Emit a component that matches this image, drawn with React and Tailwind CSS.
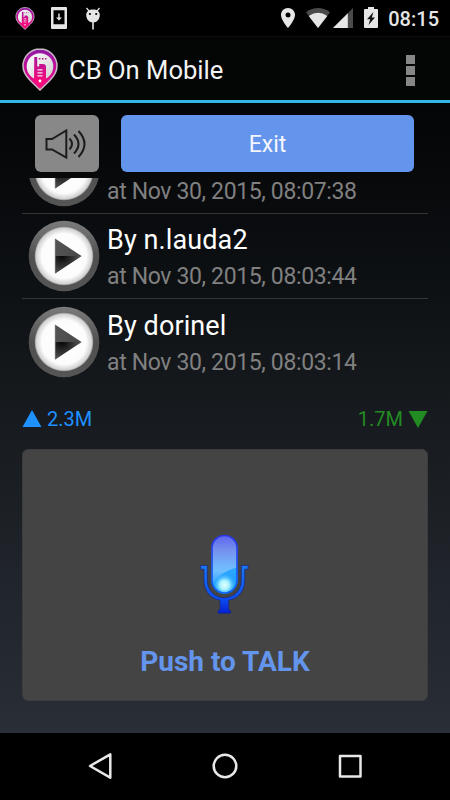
const recordings = [
  { id: 1, time: "Nov 30, 2015, 08:07:38" },
  { id: 2, name: "n.lauda2", time: "Nov 30, 2015, 08:03:44" },
  { id: 3, name: "dorinel", time: "Nov 30, 2015, 08:03:14" },
];

// Pink pin with a walkie-talkie, used in the status bar and the title
function AppLogo({ id, className }) {
  return (
    <svg viewBox="0 0 36 43" className={className}>
      <defs>
        <linearGradient id={id} x1="0" y1="0" x2="0" y2="1">
          <stop offset="0" stopColor="#8f1aa8" />
          <stop offset="0.5" stopColor="#c80c94" />
          <stop offset="1" stopColor="#ff0a78" />
        </linearGradient>
        <linearGradient id={`${id}-device`} gradientUnits="userSpaceOnUse" x1="0" y1="8" x2="0" y2="34">
          <stop offset="0" stopColor="#a5169f" />
          <stop offset="1" stopColor="#ff0a78" />
        </linearGradient>
        <linearGradient id={`${id}-disc`} x1="0" y1="0" x2="1" y2="1">
          <stop offset="0" stopColor="#ffffff" />
          <stop offset="1" stopColor="#cfcfcf" />
        </linearGradient>
      </defs>
      <path
        d="M18 1C8.4 1 1 8.5 1 18c0 5.8 3 10.2 7 14.2L18 42l10-9.800c4-4 7-8.400 7-14.200C35 8.500 27.600 1 18 1z"
        fill={`url(#${id})`}
        stroke="#c9bcc6"
        strokeWidth="1.5"
      />
      <circle cx="18" cy="18.5" r="13.3" fill={`url(#${id}-disc)`} />
      <path d="M12.300 9h2.900v9.500h2V16h3.500q3.300 0 3.300 3v13l-6 6-6-6z" fill={`url(#${id}-device)`} />
      <path d="M15.500 21.800h5M15.500 24.800h5M15.500 27.800h5" stroke="#f6e6f1" strokeWidth="1.3" />
      <circle cx="18" cy="33" r="1.4" fill="#fff" />
      <path d="M16.800 10.800h1.700M19.900 10.800h1.700M23 10.800h1.400" stroke="#b0208f" strokeWidth="1.5" />
    </svg>
  );
}

function StatusBar() {
  return (
    <div className="flex h-9 shrink-0 items-center bg-black pl-[15px] pr-[11px] text-[#e6e6e6]">
      <AppLogo id="pin-small" className="h-[23px] w-5" />
      <svg viewBox="0 0 16 22" className="ml-4 h-[22px] w-4">
        <path
          fillRule="evenodd"
          fill="currentColor"
          d="M1 0h14a1 1 0 0 1 1 1v20a1 1 0 0 1-1 1H1a1 1 0 0 1-1-1V1a1 1 0 0 1 1-1zM2.500 3.200v14h11v-14z"
        />
        <path fill="currentColor" d="M7.300 6.500h1.400v4h2.300L8 13.500l-3-3h2.300z" />
      </svg>
      <svg viewBox="0 0 16 23" className="ml-[18px] h-[23px] w-4">
        <path d="M1.500 1l3 3.500M14.500 1l-3 3.500" stroke="currentColor" strokeWidth="1.2" />
        <path
          d="M8 2.500c4 0 6.800 2 6.800 5.500C14.800 12 12 15.500 8 15.500S1.200 12 1.200 8C1.200 4.500 4 2.500 8 2.500z"
          fill="currentColor"
        />
        <path d="M7.200 15h1.600v7.500H7.200z" fill="currentColor" />
        <circle cx="4.900" cy="7" r="1.1" fill="#000" />
        <circle cx="11.200" cy="7" r="1.1" fill="#000" />
      </svg>

      <div className="ml-auto flex items-center">
        <svg viewBox="0 0 14 20" className="h-5 w-3.5">
          <path
            fillRule="evenodd"
            fill="currentColor"
            d="M7 0C3 0 0 3 0 7c0 5 7 13 7 13s7-8 7-13c0-4-3-7-7-7zm0 4.500a2.500 2.500 0 1 1 0 5 2.500 2.500 0 0 1 0-5z"
          />
        </svg>
        <svg viewBox="0 0 24 20" className="mb-px ml-[11px] h-5 w-6">
          <path d="M0 4.200Q12-4.200 24 4.200L12 20z" fill="#4a4a4a" />
          <path d="M2.700 8Q12 1.600 21.300 8L12 20z" fill="currentColor" />
        </svg>
        <svg viewBox="0 0 20 20" className="mb-px ml-[3px] h-5 w-5">
          <path d="M20 0v20H0z" fill="#4a4a4a" />
          <path d="M14.800 5.200V20H0z" fill="currentColor" />
        </svg>
        <svg viewBox="0 0 14 21" className="mb-0.5 ml-[11px] h-[21px] w-3.5">
          <path d="M4 0h6v2h3q1 0 1 1v17q0 1-1 1H1q-1 0-1-1V3q0-1 1-1h3z" fill="currentColor" />
          <path d="M9.500 5L3 12.300h3.200L4.500 18 11 10.500H7.800z" fill="#111" />
        </svg>
        <span className="ml-[10px] mt-px text-[20px] leading-none font-medium">08:15</span>
      </div>
    </div>
  );
}

function TitleBar() {
  return (
    <header className="flex h-[67px] shrink-0 items-center border-t border-b-[3px] border-t-[#0c0d0d] border-b-[#33b5e5] bg-[#040505] pl-[22px] pr-[35px]">
      <AppLogo id="pin-large" className="mt-px h-[43px] w-9" />
      <h1 className="ml-[11px] pt-[5px] text-[25.600px] leading-none text-[#f3f3f3]">CB On Mobile</h1>
      <div className="ml-auto flex flex-col gap-0.5 pt-[3px]">
        <span className="size-[9px] bg-[#868686]" />
        <span className="size-[9px] bg-[#868686]" />
        <span className="size-[9px] bg-[#868686]" />
      </div>
    </header>
  );
}

function PlayButton({ id }) {
  return (
    <svg viewBox="0 0 72 72" className="size-[72px] shrink-0">
      <defs>
        <linearGradient id={`ring-${id}`} x1="0" y1="0" x2="0" y2="1">
          <stop offset="0" stopColor="#7c7c7c" />
          <stop offset="0.5" stopColor="#505050" />
          <stop offset="1" stopColor="#555555" />
        </linearGradient>
        <radialGradient id={`face-${id}`}>
          <stop offset="0" stopColor="#ffffff" />
          <stop offset="0.76" stopColor="#fcfcfc" />
          <stop offset="0.95" stopColor="#d2d2d2" />
          <stop offset="1" stopColor="#8c8c8c" />
        </radialGradient>
        <linearGradient id={`top-${id}`} x1="0" y1="0" x2="1" y2="0.4">
          <stop offset="0" stopColor="#555555" />
          <stop offset="1" stopColor="#484848" />
        </linearGradient>
        <radialGradient id={`low-${id}`} gradientUnits="userSpaceOnUse" cx="34" cy="36" r="20">
          <stop offset="0" stopColor="#050505" />
          <stop offset="1" stopColor="#5c5c5c" />
        </radialGradient>
      </defs>
      <circle cx="36" cy="36" r="35.3" fill={`url(#ring-${id})`} />
      <circle cx="36" cy="36" r="29.3" fill={`url(#face-${id})`} />
      <path d="M27 18.500L53.500 36 27 53.500z" fill={`url(#top-${id})`} />
      <path d="M27 36h26.500L27 53.500z" fill={`url(#low-${id})`} />
      <path d="M27.300 19v34" stroke="#777777" strokeWidth="0.8" />
    </svg>
  );
}

function RecordingRow({ recording }) {
  return (
    <li className="flex h-[85.200px] shrink-0 items-center border-b border-[#333537] pl-1.5 last:border-b-0">
      <PlayButton id={recording.id} />
      <div className="ml-[7px] flex h-[74px] flex-col justify-end whitespace-nowrap">
        {recording.name && (
          <p className="text-[27px] leading-8 tracking-[0.100px] text-white">By {recording.name}</p>
        )}
        <p className="mt-[5px] text-[23px] leading-8 tracking-[-0.360px] text-[#808080]">at {recording.time}</p>
      </div>
    </li>
  );
}

function Microphone() {
  return (
    <svg viewBox="0 0 50 80" className="mr-0.5 h-20 w-[50px]">
      <defs>
        <linearGradient id="mic-body" x1="0" y1="0" x2="0" y2="1">
          <stop offset="0" stopColor="#5c62ee" />
          <stop offset="0.25" stopColor="#7590ee" />
          <stop offset="0.6" stopColor="#70c0ff" />
          <stop offset="1" stopColor="#168dff" />
        </linearGradient>
        <linearGradient id="mic-edge" x1="0" y1="0" x2="0" y2="1">
          <stop offset="0" stopColor="#2a35e8" />
          <stop offset="1" stopColor="#0a63f5" />
        </linearGradient>
        <linearGradient id="mic-stand" x1="0" y1="0" x2="0" y2="1">
          <stop offset="0" stopColor="#1b78f5" />
          <stop offset="0.7" stopColor="#0b4df0" />
          <stop offset="1" stopColor="#061fd0" />
        </linearGradient>
        <radialGradient id="mic-glow">
          <stop offset="0" stopColor="#e4ffff" />
          <stop offset="0.4" stopColor="#a5f1ff" />
          <stop offset="1" stopColor="#20a8ff" stopOpacity="0" />
        </radialGradient>
        <clipPath id="mic-clip">
          <rect x="12.500" y="1" width="26" height="58.500" rx="13" />
        </clipPath>
      </defs>
      <path
        d="M1.500 31.500h6.800v15c0 10 7.500 17.300 17 17.300s17-7.300 17-17.300v-15h6.800v3.700h-3.400v11.500c0 10.300-7 18.200-16 19.500v9.300l2 1.300v2.500H19v-2.500l2-1.300v-9.300C12 64.900 5 57 5 46.700V35.200H1.500z"
        fill="url(#mic-stand)"
        stroke="#17277a"
        strokeWidth="0.7"
      />
      <g clipPath="url(#mic-clip)">
        <rect x="12" y="1" width="27" height="59" fill="url(#mic-body)" />
        <path d="M12 52Q20 38 39 33v28H12z" fill="#159dff" opacity="0.75" />
        <circle cx="25.500" cy="51" r="12" fill="url(#mic-glow)" />
      </g>
      <rect x="13" y="1.500" width="25" height="57.500" rx="12.500" fill="none" stroke="url(#mic-edge)" strokeWidth="1.6" />
    </svg>
  );
}

function NavBar() {
  return (
    <nav className="flex h-[67px] shrink-0 items-center justify-between bg-black px-[87px] text-[#e8e8e8]">
      <svg viewBox="0 0 26 28" className="mb-px h-7 w-[26px]" fill="none" stroke="currentColor" strokeWidth="2.500" strokeLinejoin="round">
        <path d="M23.300 2.300v23.400L3 14z" />
      </svg>
      <svg viewBox="0 0 26 26" className="mb-px size-[26px]" fill="none" stroke="currentColor" strokeWidth="2.500">
        <circle cx="13" cy="13" r="11.3" />
      </svg>
      <svg viewBox="0 0 26 26" className="mb-px size-[26px]" fill="none" stroke="currentColor" strokeWidth="2.500" strokeLinejoin="round">
        <rect x="3" y="3" width="20.500" height="20.500" />
      </svg>
    </nav>
  );
}

export default function App() {
  return (
    <div className="flex h-[800px] w-[450px] flex-col overflow-hidden bg-black font-[Roboto,sans-serif]">
      <StatusBar />
      <TitleBar />

      <main className="flex min-h-0 flex-1 flex-col bg-linear-to-b from-[#040506] via-[#171b1f] to-[#292e37] px-[22px] pt-3">
        <div className="flex h-[57px] shrink-0 gap-[22px] pl-[13px] pr-3.5">
          <button className="flex w-16 items-center justify-center rounded-md bg-[#888888]">
            <svg viewBox="0 0 42 32" className="mr-0.5 h-8 w-[42px]" fill="none" stroke="#1c1c1c" strokeWidth="2">
              <path d="M1.500 11h5.500L21.300 2.500v27L7 21.500H1.500z" />
              <path d="M24.500 10.500q5 5.500 0 11M29 6.500q9 9.500 0 19M33.500 3q12 13 0 26" />
            </svg>
          </button>
          <button className="flex-1 rounded-md bg-[#6495ed] pt-1 text-[23px] text-[#f4f6fc]">Exit</button>
        </div>

        {/* Scrolled list, the first row is partly hidden */}
        <ul className="mt-1.5 flex h-[206.500px] shrink-0 flex-col justify-end overflow-hidden">
          {recordings.map((recording) => (
            <RecordingRow key={recording.id} recording={recording} />
          ))}
        </ul>

        <div className="mt-[22.500px] flex h-6 shrink-0 items-center justify-between text-[20px] leading-6">
          <div className="flex items-center gap-[5px] text-[#1e90ff]">
            <svg viewBox="0 0 20 17" className="mb-0.5 h-[17px] w-5">
              <path d="M10 0l9.500 17H0.500z" fill="currentColor" />
            </svg>
            <span>2.3M</span>
          </div>
          <div className="flex items-center gap-[5px] text-[#228b22]">
            <span>1.7M</span>
            <svg viewBox="0 0 20 17" className="h-[17px] w-5">
              <path d="M10 17L0.500 0h19z" fill="currentColor" />
            </svg>
          </div>
        </div>

        <button className="mt-[18px] flex h-[252px] shrink-0 flex-col items-center rounded-md border border-[#3a3c3e] bg-[#444444] pt-[84px]">
          <Microphone />
          <span className="mt-8 text-[28px] leading-8 font-bold text-[#6495ed]">Push to TALK</span>
        </button>
      </main>

      <NavBar />
    </div>
  );
}
